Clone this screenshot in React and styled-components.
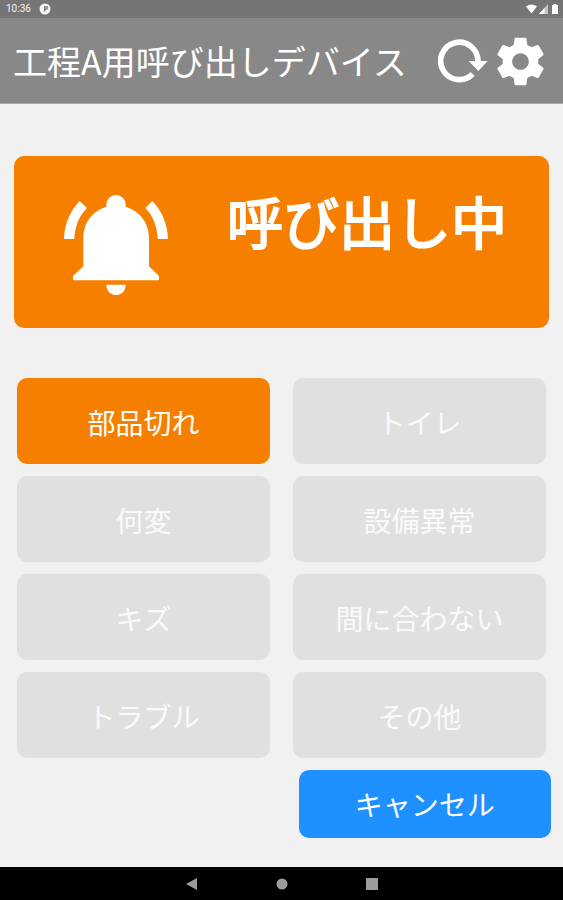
import React, { useState } from "react";
import styled, { createGlobalStyle } from "styled-components";

const GlobalStyle = createGlobalStyle`
  *, *::before, *::after { box-sizing: border-box; }
  body {
    margin: 0;
    background: #f1f1f1;
    font-family: "Noto Sans CJK JP", "Noto Sans", sans-serif;
  }
  button { font-family: inherit; border: 0; margin: 0; cursor: pointer; }
`;

const Screen = styled.div`
  display: flex;
  flex-direction: column;
  min-height: 100vh;
`;

const StatusBar = styled.div`
  display: flex;
  align-items: center;
  justify-content: space-between;
  padding: 0 4px 0 6px;
  background: #757575;
  color: #f4f4f4;
  font-family: Roboto, sans-serif;
  font-size: 10px;
  line-height: 18px;
`;

const StatusGroup = styled.div`
  display: flex;
  align-items: center;
  gap: ${(p) => p.$gap}px;
`;

const Header = styled.header`
  display: flex;
  align-items: center;
  justify-content: space-between;
  padding: 14px 14px 13px 13px;
  background: #888888;
  border-bottom: 1px solid #ababab;
`;

const Title = styled.h1`
  margin: 0;
  color: #ffffff;
  font-size: 34px;
  font-weight: 400;
  line-height: 58px;
`;

const HeaderActions = styled.div`
  display: flex;
  align-items: center;
  gap: 4px;
`;

const IconButton = styled.button`
  display: flex;
  padding: 0;
  background: none;
  color: #ffffff;
`;

const Main = styled.main`
  flex: 1;
  padding: 52px 14px 28px;
`;

const Banner = styled.section`
  display: flex;
  align-items: flex-start;
  padding: 22px 42px 33px 50px;
  border-radius: 10px;
  background: #f77f00;
  color: #ffffff;
`;

const BellIcon = styled.svg`
  flex: none;
  margin-top: 17px;
`;

const BannerText = styled.p`
  flex: 1;
  margin: 0;
  text-align: right;
  font-size: 56px;
  font-weight: 400;
  line-height: 84px;
  -webkit-text-stroke: 2px currentColor;
`;

const CallGrid = styled.div`
  display: grid;
  grid-template-columns: 1fr 1fr;
  gap: 12px 23px;
  margin-top: 50px;
  padding: 0 3px;
`;

const CallButton = styled.button`
  padding: 23px 8px 21px;
  border-radius: 10px;
  background: ${(p) => (p.$active ? "#f77f00" : "#e0e0e0")};
  color: ${(p) => (p.$active ? "#ffffff" : "#fafafa")};
  font-size: 28px;
  line-height: 42px;
`;

const Footer = styled.div`
  display: flex;
  justify-content: flex-end;
  margin: 12px -2px 0 0;
`;

const CancelButton = styled.button`
  width: 47%;
  padding: 13px 8px;
  border-radius: 10px;
  background: #1e90ff;
  color: #ffffff;
  font-size: 28px;
  line-height: 42px;
`;

const NavBar = styled.nav`
  display: flex;
  justify-content: center;
  gap: 74px;
  padding: 9px 0 8px;
  background: #000000;
`;

const NavButton = styled.button`
  display: flex;
  padding: 0;
  background: none;
  color: #9b9b9b;
`;

const reasons = [
  "部品切れ",
  "トイレ",
  "何変",
  "設備異常",
  "キズ",
  "間に合わない",
  "トラブル",
  "その他",
];

export default function App() {
  const [active, setActive] = useState(reasons[0]);

  return (
    <Screen>
      <GlobalStyle />
      <StatusBar>
        <StatusGroup $gap={8}>
          <span>10:36</span>
          <svg width="12" height="12" viewBox="0 0 12 12" aria-hidden="true">
            <circle cx="6" cy="6" r="5.5" fill="#f6f6f6" />
            <path d="M5 3.2h4v3.2H6.6v2H5z" fill="#777777" />
            <path d="M6.2 4.4H9v1.2H6.2z" fill="#b0b0b0" />
          </svg>
        </StatusGroup>
        <StatusGroup $gap={2}>
          <svg width="11" height="10" viewBox="0 0 11 10" aria-hidden="true">
            <path d="M0 2.4Q5.5-1.6 11 2.4L5.5 9.4z" fill="#ffffff" />
          </svg>
          <svg width="9" height="10" viewBox="0 0 9 10" aria-hidden="true">
            <path d="M9 0v10H0z" fill="#c4c4c4" />
            <path d="M5.5 4v6H0z" fill="#ffffff" />
          </svg>
          <svg width="9" height="10" viewBox="0 0 9 10" aria-hidden="true">
            <path d="M3.5 0h3v1H8v9H2V1h1.5z" fill="#ffffff" />
          </svg>
        </StatusGroup>
      </StatusBar>

      <Header>
        <Title>工程A用呼び出しデバイス</Title>
        <HeaderActions>
          <IconButton type="button" aria-label="更新">
            <svg width="50" height="44" viewBox="0 0 150 132">
              <path
                d="M120 66A56 56 0 1 0 104 105"
                fill="none"
                stroke="currentColor"
                strokeWidth="17"
              />
              <path d="M92 66h57l-28 30z" fill="currentColor" />
            </svg>
          </IconButton>
          <IconButton type="button" aria-label="設定">
            <svg width="57" height="57" viewBox="0 0 24 24">
              <path
                fill="currentColor"
                d="M19.43 12.98c.04-.32.07-.64.07-.98s-.03-.66-.07-.98l2.11-1.65c.19-.15.24-.42.12-.64l-2-3.46c-.12-.22-.39-.3-.61-.22l-2.49 1c-.52-.4-1.08-.73-1.69-.98l-.38-2.65C14.46 2.18 14.25 2 14 2h-4c-.25 0-.46.18-.49.42l-.38 2.65c-.61.25-1.17.59-1.69.98l-2.49-1c-.23-.09-.49 0-.61.22l-2 3.46c-.13.22-.07.49.12.64l2.11 1.65c-.04.32-.07.65-.07.98s.03.66.07.98l-2.11 1.65c-.19.15-.24.42-.12.64l2 3.46c.12.22.39.3.61.22l2.49-1c.52.4 1.08.73 1.69.98l.38 2.65c.03.24.24.42.49.42h4c.25 0 .46-.18.49-.42l.38-2.65c.61-.25 1.17-.59 1.69-.98l2.49 1c.23.09.49 0 .61-.22l2-3.46c.12-.22.07-.49-.12-.64l-2.11-1.65zM12 15.5c-1.93 0-3.5-1.57-3.5-3.5s1.57-3.5 3.5-3.5 3.5 1.57 3.5 3.5-1.57 3.5-3.5 3.5z"
              />
            </svg>
          </IconButton>
        </HeaderActions>
      </Header>

      <Main>
        <Banner role="status">
          <BellIcon width="104" height="100" viewBox="0 0 312 300" fill="#ffffff" aria-hidden="true">
            <path d="M127 35V29a29 29 0 0 1 58 0v6c43 13 70 50 70 93v86l30 29v13H27v-13l31-29v-86c0-43 26-80 69-93z" />
            <path d="M127 269h58c0 18-13 31-29 31s-29-13-29-31z" />
            <path d="M47 18l22 21C45 63 32 97 31 132H0C1 88 18 48 47 18z" />
            <path d="M265 18l-21 21c24 24 36 58 37 93h31c-1-44-18-84-47-114z" />
          </BellIcon>
          <BannerText>呼び出し中</BannerText>
        </Banner>

        <CallGrid>
          {reasons.map((reason) => (
            <CallButton
              key={reason}
              type="button"
              $active={reason === active}
              aria-pressed={reason === active}
              onClick={() => setActive(reason)}
            >
              {reason}
            </CallButton>
          ))}
        </CallGrid>

        <Footer>
          <CancelButton type="button" onClick={() => setActive(null)}>
            キャンセル
          </CancelButton>
        </Footer>
      </Main>

      <NavBar>
        <NavButton type="button" aria-label="戻る">
          <svg width="16" height="16" viewBox="0 0 16 16">
            <path d="M13 2v12L2 8z" fill="currentColor" />
          </svg>
        </NavButton>
        <NavButton type="button" aria-label="ホーム">
          <svg width="16" height="16" viewBox="0 0 16 16">
            <circle cx="8" cy="8" r="5.5" fill="currentColor" />
          </svg>
        </NavButton>
        <NavButton type="button" aria-label="履歴">
          <svg width="16" height="16" viewBox="0 0 16 16">
            <rect x="2" y="2" width="12" height="12" rx="1" fill="currentColor" />
          </svg>
        </NavButton>
      </NavBar>
    </Screen>
  );
}
